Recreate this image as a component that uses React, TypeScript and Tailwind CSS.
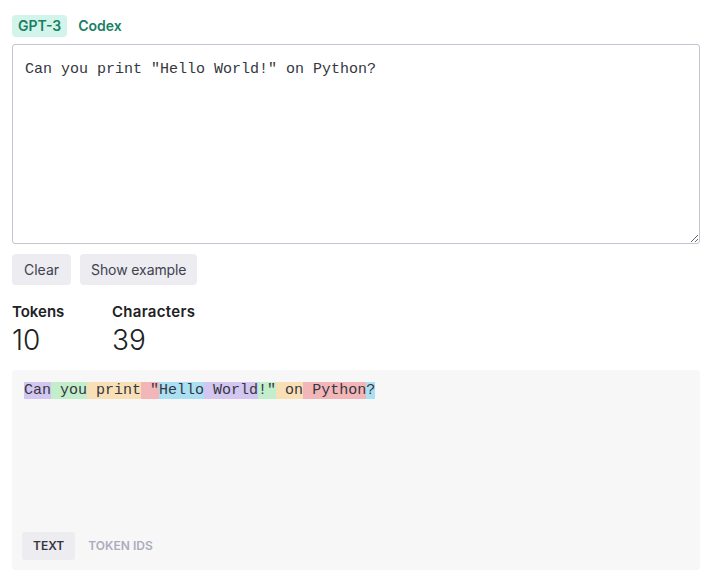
import React, { useState } from 'react';

const sample = 'Can you print "Hello World!" on Python?';

// token colours cycle like the tokenizer page
const tokens: { text: string; color: string }[] = [
  { text: 'Can', color: 'bg-[#d3c6f1]' },
  { text: ' you', color: 'bg-[#c3eecb]' },
  { text: ' print', color: 'bg-[#f9dfb5]' },
  { text: ' "', color: 'bg-[#f3b6b8]' },
  { text: 'Hello', color: 'bg-[#abdff3]' },
  { text: ' World', color: 'bg-[#d3c6f1]' },
  { text: '!"', color: 'bg-[#c3eecb]' },
  { text: ' on', color: 'bg-[#f9dfb5]' },
  { text: ' Python', color: 'bg-[#f3b6b8]' },
  { text: '?', color: 'bg-[#abdff3]' },
];

export default function App() {
  const [model, setModel] = useState<'gpt3' | 'codex'>('gpt3');
  const [view, setView] = useState<'text' | 'ids'>('text');
  const [value, setValue] = useState(sample);

  return (
    <div className="min-h-screen w-full bg-white font-['Inter',sans-serif] text-[#202123]">
      <div className="ml-3 w-[688px] pt-[15px]">
        {/* Model tabs */}
        <div className="flex items-center gap-[11px]">
          <button
            onClick={() => setModel('gpt3')}
            className={`h-[22px] rounded-[4px] px-[6px] text-[14px] font-semibold leading-[22px] text-[#1a7f64] ${model === 'gpt3' ? 'bg-[#d2f4ea]' : ''}`}
          >
            GPT-3
          </button>
          <button
            onClick={() => setModel('codex')}
            className={`h-[22px] rounded-[4px] text-[14px] font-semibold leading-[22px] text-[#1a7f64] ${model === 'codex' ? 'bg-[#d2f4ea] px-[6px]' : ''}`}
          >
            Codex
          </button>
        </div>

        {/* Input */}
        <textarea
          value={value}
          onChange={(e) => setValue(e.target.value)}
          className="mt-[7px] block h-[200px] w-full resize-y rounded-[3px] border border-[#c5c5d2] px-3 pt-[14px] font-['Liberation_Mono',monospace] text-[15px] leading-[22px] text-[#353740] outline-none"
        />

        {/* Actions */}
        <div className="mt-[10px] flex gap-[9px]">
          <button
            onClick={() => setValue('')}
            className="h-[31px] rounded-[4px] bg-[#ececf1] px-3 text-[14px] text-[#40414f]"
          >
            Clear
          </button>
          <button
            onClick={() => setValue(sample)}
            className="h-[31px] rounded-[4px] bg-[#ececf1] px-[11px] text-[14px] tracking-[-0.1px] text-[#40414f]"
          >
            Show example
          </button>
        </div>

        {/* Stats */}
        <div className="mt-[17px] flex gap-12">
          <div className="w-[52px]">
            <div className="text-[15px] font-semibold leading-[20px]">Tokens</div>
            <div className="mt-[2px] text-[28px] font-light leading-[32px]">10</div>
          </div>
          <div>
            <div className="text-[15px] font-semibold leading-[20px] tracking-[0.3px]">Characters</div>
            <div className="mt-[2px] text-[28px] font-light leading-[32px]">{value.length}</div>
          </div>
        </div>

        {/* Output */}
        <div className="mt-[14px] flex h-[200px] flex-col justify-between rounded-[3px] bg-[#f7f7f8] pb-[10px] pl-[10px] pr-3 pt-3">
          <div className="pl-[2px] font-['Liberation_Mono',monospace] text-[15px] leading-[17px] text-[#353740] whitespace-pre">
            {view === 'text'
              ? tokens.map((t, i) => (
                  <span key={i} className={t.color}>
                    {t.text}
                  </span>
                ))
              : '[6090, 345, 3601, 366, 15496, 2159, 2474, 319, 11361, 30]'}
          </div>
          <div className="flex items-center gap-[2px]">
            <button
              onClick={() => setView('text')}
              className={`h-[28px] rounded-[3px] px-[11px] text-[12px] font-semibold ${view === 'text' ? 'bg-[#ececf1] text-[#353740]' : 'text-[#acacbe]'}`}
            >
              TEXT
            </button>
            <button
              onClick={() => setView('ids')}
              className={`h-[28px] rounded-[3px] px-[11px] text-[12px] font-semibold ${view === 'ids' ? 'bg-[#ececf1] text-[#353740]' : 'text-[#acacbe]'}`}
            >
              TOKEN IDS
            </button>
          </div>
        </div>
      </div>
    </div>
  );
}
